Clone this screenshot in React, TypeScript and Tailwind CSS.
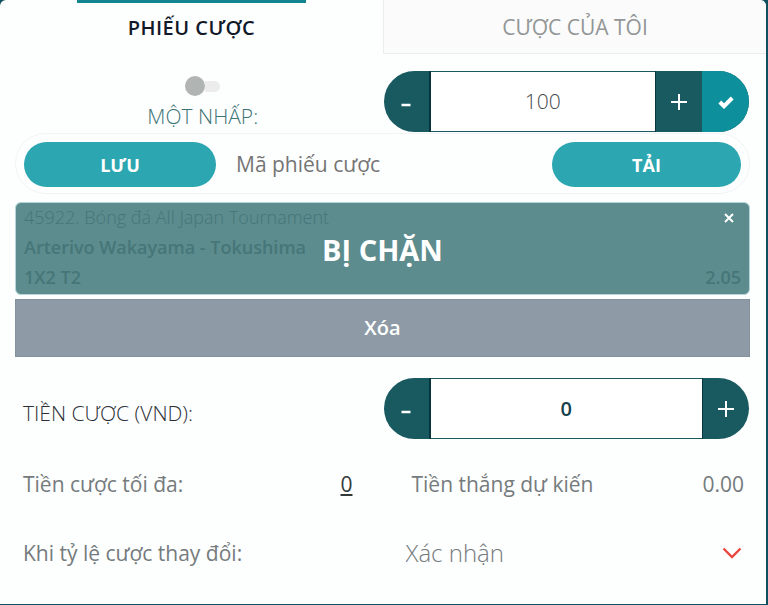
import React, { useState } from 'react';

interface StepperProps {
  id: string;
  label: string;
  value: number;
  onChange: (value: number) => void;
  inputClass: string;
  onConfirm?: () => void;
}

const Stepper: React.FC<StepperProps> = ({ id, label, value, onChange, inputClass, onConfirm }) => (
  <div className="mr-px ml-px flex h-[61px] overflow-hidden rounded-full bg-[#185a60]">
    <button
      type="button"
      aria-label="Giảm"
      className="flex w-[47px] shrink-0 items-center justify-center border-r-2 border-[#06353d] text-white"
      onClick={() => onChange(Math.max(0, value - 1))}
    >
      <svg width="18" height="18" viewBox="0 0 18 18" aria-hidden="true">
        <path d="M4.500 12h9" stroke="currentColor" strokeWidth="2.4" />
      </svg>
    </button>
    <input
      id={id}
      aria-label={label}
      inputMode="numeric"
      className={`min-w-0 flex-1 border-y border-[#185a60] bg-white text-center outline-none ${inputClass}`}
      value={value}
      onChange={(e) => onChange(Number(e.target.value) || 0)}
    />
    <button
      type="button"
      aria-label="Tăng"
      className="flex w-[47px] shrink-0 items-center justify-center border-l border-[#06353d] text-white"
      onClick={() => onChange(value + 1)}
    >
      <svg width="18" height="18" viewBox="0 0 18 18" aria-hidden="true">
        <path d="M1 9h16M9 1v16" stroke="currentColor" strokeWidth="2" />
      </svg>
    </button>
    {onConfirm && (
      <button
        type="button"
        aria-label="Đồng ý"
        className="flex w-[47px] shrink-0 items-center justify-center bg-[#0e909c] text-white"
        onClick={onConfirm}
      >
        <svg width="16" height="14" viewBox="0 0 16 14" aria-hidden="true">
          <path d="M1.800 7l4.200 4.200L14.200 3" fill="none" stroke="currentColor" strokeWidth="4" />
        </svg>
      </button>
    )}
  </div>
);

const App: React.FC = () => {
  const [oneClick, setOneClick] = useState(false);
  const [quickStake, setQuickStake] = useState(100);
  const [stake, setStake] = useState(0);

  return (
    <div className="bg-[#0f4f5e] pr-[2px] pb-[2px] font-['Open_Sans',sans-serif] text-[#757b7d]">
      <main className="overflow-hidden rounded-t-md bg-[#fdfefe] pb-[34px]">
        <nav className="grid h-[54px] grid-cols-2">
          <button type="button" className="flex flex-col items-center text-xl font-semibold text-[#111827]">
            <span className="h-[3px] w-3/5 bg-[#128591]"></span>
            <span className="flex flex-1 items-center pb-[2px] tracking-wide">PHIẾU CƯỢC</span>
          </button>
          <button type="button" className="border-b border-l border-[#eceeee] bg-[#fbfbfb] pt-[3px] text-[21px] text-[#929696]">
            CƯỢC CỦA TÔI
          </button>
        </nav>

        <div className="pr-4 pl-[15px]">
          <section className="grid grid-cols-2 pt-[17px]">
            <label className="flex cursor-pointer flex-col items-center gap-1 pt-[5px] pl-2 text-[21px] leading-8 font-light text-[#3f7475]">
              <input
                type="checkbox"
                className="peer sr-only"
                checked={oneClick}
                onChange={(e) => setOneClick(e.target.checked)}
              />
              <span className="flex h-5 w-9 items-center peer-checked:flex-row-reverse">
                <span className="h-5 w-5 shrink-0 rounded-full bg-[#b0b4b3]"></span>
                <span className="h-[11px] w-[15px] rounded-r-full bg-[#ebeceb]"></span>
              </span>
              <span>MỘT NHẤP:</span>
            </label>
            <Stepper
              id="quick-stake"
              label="Tiền cược một nhấp"
              value={quickStake}
              onChange={setQuickStake}
              inputClass="text-[21px] font-light text-[#444a4c]"
              onConfirm={() => setOneClick(true)}
            />
          </section>

          <form
            className="mt-px flex h-[61px] items-center rounded-full border border-[#f2f3f5] px-2 pt-[2px]"
            onSubmit={(e) => e.preventDefault()}
          >
            <button type="button" className="h-[45px] w-48 shrink-0 rounded-full bg-[#2ca7b1] text-lg font-bold text-white">
              LƯU
            </button>
            <input
              aria-label="Mã phiếu cược"
              placeholder="Mã phiếu cược"
              className="min-w-0 flex-1 px-5 text-[21px] outline-none placeholder:text-[#757575]"
            />
            <button type="submit" className="h-[45px] w-[189px] shrink-0 rounded-full bg-[#2ca7b1] text-lg font-bold text-white">
              TẢI
            </button>
          </form>

          <article className="relative mt-2 h-[93px] rounded-md border border-[#b5d6da] bg-[#5c8c8e] px-2 text-lg text-[#467678]">
            <p className="leading-7 font-light">45922. Bóng đá All Japan Tournament</p>
            <p className="leading-8 font-semibold">Arterivo Wakayama - Tokushima</p>
            <p className="flex justify-between leading-7 font-semibold">
              <span>1X2 T2</span>
              <span>2.05</span>
            </p>
            <strong className="absolute inset-0 flex items-center justify-center pt-[2px] text-[29px] font-bold text-white">
              BỊ CHẶN
            </strong>
            <button type="button" aria-label="Đóng" className="absolute top-[6px] right-[11px] p-1 text-white">
              <svg width="10" height="10" viewBox="0 0 10 10" aria-hidden="true">
                <path d="M1 1l8 8M9 1l-8 8" stroke="currentColor" strokeWidth="2" />
              </svg>
            </button>
          </article>

          <button type="button" className="mt-1 h-[58px] w-full border border-[#83929d] bg-[#8e9ba6] text-xl font-semibold text-white">
            Xóa
          </button>

          <section className="mt-[21px] grid grid-cols-2 items-center">
            <label htmlFor="stake" className="px-2 pt-[10px] text-[21px] font-light text-[#2c3036]">
              TIỀN CƯỢC (VND):
            </label>
            <Stepper
              id="stake"
              label="Tiền cược (VND)"
              value={stake}
              onChange={setStake}
              inputClass="text-xl font-semibold text-[#15414c]"
            />
          </section>

          <section className="mt-[29px] grid grid-cols-2 text-[21px] leading-8">
            <p className="flex justify-between pr-[30px] pl-2">
              <span>Tiền cược tối đa:</span>
              <a href="#stake" className="text-[#33383a] underline">0</a>
            </p>
            <p className="flex justify-between pr-[6px] pl-[29px]">
              <span>Tiền thắng dự kiến</span>
              <span>0.00</span>
            </p>
          </section>

          <section className="mt-9 grid grid-cols-2 items-center text-[21px] leading-8">
            <label htmlFor="odds-change" className="pl-2">Khi tỷ lệ cược thay đổi:</label>
            <div className="grid items-center pr-2 pl-[23px]">
              <select
                id="odds-change"
                className="col-start-1 row-start-1 h-[34px] w-full appearance-none bg-transparent text-2xl font-light outline-none"
              >
                <option>Xác nhận</option>
              </select>
              <svg
                className="pointer-events-none col-start-1 row-start-1 justify-self-end"
                width="20"
                height="12"
                viewBox="0 0 20 12"
                aria-hidden="true"
              >
                <path d="M1.500 1.500L10 10l8.500-8.500" fill="none" stroke="#e8473f" strokeWidth="2.4" />
              </svg>
            </div>
          </section>
        </div>
      </main>
    </div>
  );
};

export default App;
